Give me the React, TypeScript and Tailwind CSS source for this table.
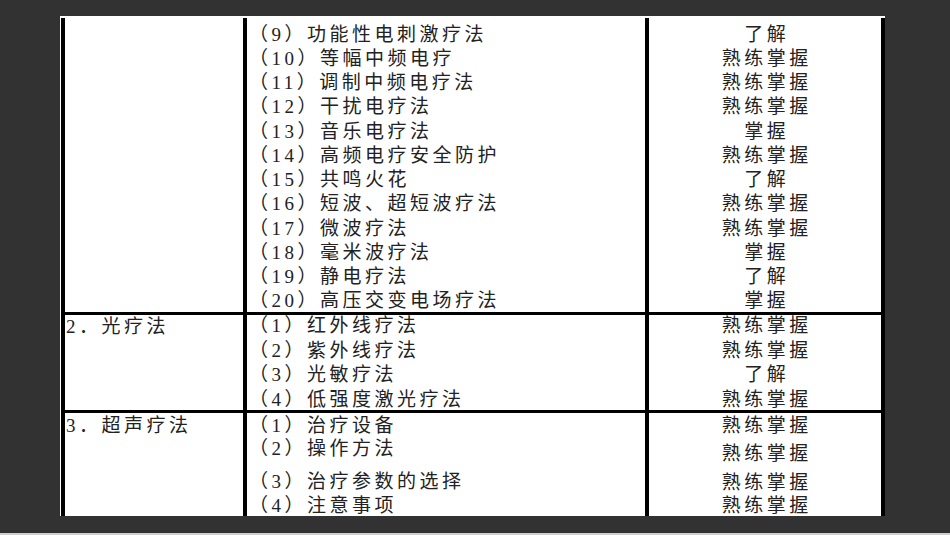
const font = "font-['Liberation_Serif','Noto_Sans_CJK_SC',serif]";

const part1: [string, string][] = [
  ['（9）功能性电刺激疗法', '了解'],
  ['（10）等幅中频电疗', '熟练掌握'],
  ['（11）调制中频电疗法', '熟练掌握'],
  ['（12）干扰电疗法', '熟练掌握'],
  ['（13）音乐电疗法', '掌握'],
  ['（14）高频电疗安全防护', '熟练掌握'],
  ['（15）共鸣火花', '了解'],
  ['（16）短波、超短波疗法', '熟练掌握'],
  ['（17）微波疗法', '熟练掌握'],
  ['（18）毫米波疗法', '掌握'],
  ['（19）静电疗法', '了解'],
  ['（20）高压交变电场疗法', '掌握'],
];

const part2: [string, string][] = [
  ['（1）红外线疗法', '熟练掌握'],
  ['（2）紫外线疗法', '熟练掌握'],
  ['（3）光敏疗法', '了解'],
  ['（4）低强度激光疗法', '熟练掌握'],
];

// section 3 rows are not evenly spaced in the scan, so each line gets its own offset
const part3Items = [
  { text: '（1）治疗设备', mt: 'mt-[2.5px]' },
  { text: '（2）操作方法', mt: 'mt-[3px]' },
  { text: '（3）治疗参数的选择', mt: 'mt-[13px]' },
  { text: '（4）注意事项', mt: 'mt-[4px]' },
];
const part3Levels = [
  { text: '熟练掌握', mt: 'mt-[3px]' },
  { text: '熟练掌握', mt: 'mt-[8px]' },
  { text: '熟练掌握', mt: 'mt-[9px]' },
  { text: '熟练掌握', mt: 'mt-[3px]' },
];

function Line({ children, className = '' }: { children: React.ReactNode; className?: string }) {
  return <div className={`h-[20px] shrink-0 leading-[20px] whitespace-nowrap ${className}`}>{children}</div>;
}

export default function App() {
  return (
    <div className={`flex h-[535px] w-[950px] flex-col bg-[#323232] ${font}`}>
      <div className="ml-[60px] mt-[16px] h-[500px] w-[825px] overflow-hidden bg-white pl-px pt-[2px]">
        <div className="flex h-full flex-col border-l-4 border-r-4 border-black text-[19px] tracking-[3.5px] text-[#222]">
          {/* 1. 电疗法 (continued) */}
          <div className="flex h-[294px] shrink-0">
            <div className="w-[182px] shrink-0 border-r-4 border-black" />
            <div className="flex w-[402px] shrink-0 flex-col gap-[4.27px] border-r-4 border-black pl-[2px] pt-[6.5px]">
              {part1.map(([t]) => (
                <Line key={t}>{t}</Line>
              ))}
            </div>
            <div className="flex flex-1 flex-col gap-[4.27px] pl-[3.5px] pt-[6.5px] text-center">
              {part1.map(([t, lv]) => (
                <Line key={t}>{lv}</Line>
              ))}
            </div>
          </div>

          {/* 2. 光疗法 */}
          <div className="flex h-[98px] shrink-0 border-t-[3px] border-black">
            <div className="w-[182px] shrink-0 border-r-4 border-black pl-px">
              <Line className="mt-[2px]">2．光疗法</Line>
            </div>
            <div className="flex w-[402px] shrink-0 flex-col gap-[4.67px] border-r-4 border-black pl-[2px] pt-px">
              {part2.map(([t]) => (
                <Line key={t}>{t}</Line>
              ))}
            </div>
            <div className="flex flex-1 flex-col gap-[4.67px] pl-[3.5px] pt-px text-center">
              {part2.map(([t, lv]) => (
                <Line key={t}>{lv}</Line>
              ))}
            </div>
          </div>

          {/* 3. 超声疗法 */}
          <div className="flex flex-1 border-t-[3px] border-black">
            <div className="w-[182px] shrink-0 border-r-4 border-black pl-px">
              <Line className="mt-[2.5px]">3．超声疗法</Line>
            </div>
            <div className="w-[402px] shrink-0 border-r-4 border-black pl-[2px]">
              {part3Items.map((r) => (
                <Line key={r.text} className={r.mt}>
                  {r.text}
                </Line>
              ))}
            </div>
            <div className="flex-1 pl-[3.5px] text-center">
              {part3Levels.map((r, i) => (
                <Line key={i} className={r.mt}>
                  {r.text}
                </Line>
              ))}
            </div>
          </div>
        </div>
      </div>
      <div className="mt-auto h-[2px] bg-[#cfcfcf]" />
    </div>
  );
}
